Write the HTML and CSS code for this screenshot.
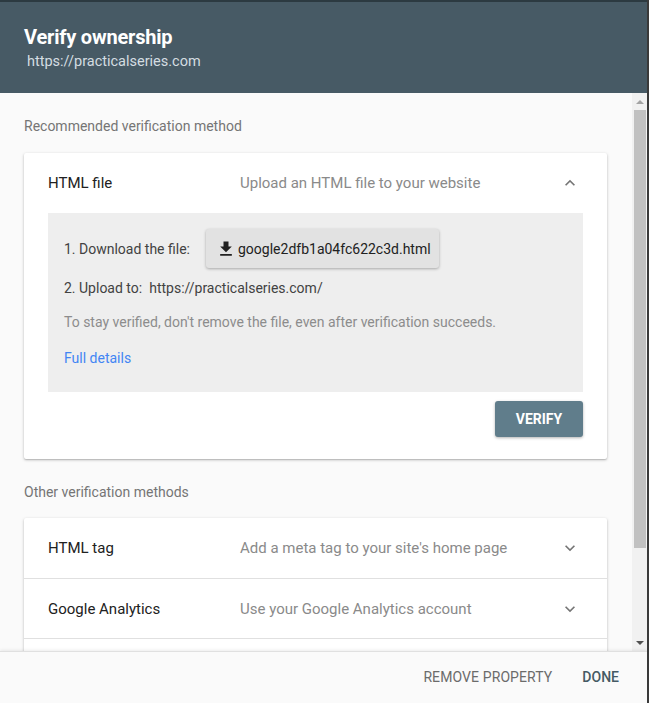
FILE: index.html
```html
<!DOCTYPE html>
<html>
<head>
<meta charset="utf-8">
<link rel="stylesheet" href="styles.css">
</head>
<body>
<div class="dialog">
  <header class="head">
    <h1 class="title">Verify ownership</h1>
    <div class="site">https://practicalseries.com</div>
  </header>
  <div class="middle">
    <main class="content">
      <div class="section-label">Recommended verification method</div>
      <section class="card">
        <div class="row">
          <div class="row-title">HTML file</div>
          <div class="row-desc">Upload an HTML file to your website</div>
          <svg class="chev" viewBox="0 0 24 24" width="20" height="20"><path d="M7.41 15.41 12 10.83l4.59 4.58L18 14l-6-6-6 6z" fill="#757575"/></svg>
        </div>
        <div class="panel">
          <div class="step">
            <span class="step-label">1. Download the file:</span>
            <button class="file-btn">
              <svg viewBox="0 0 24 24" width="20" height="20"><path d="M19 9h-4V3H9v6H5l7 7 7-7zM5 18v2h14v-2H5z" fill="#212121"/></svg>
              <span>google2dfb1a04fc622c3d.html</span>
            </button>
          </div>
          <div class="step step2">
            <span class="step-label">2. Upload to:</span>
            <span class="url">https://practicalseries.com/</span>
          </div>
          <p class="note">To stay verified, don't remove the file, even after verification succeeds.</p>
          <a class="link">Full details</a>
        </div>
        <div class="actions">
          <button class="verify">VERIFY</button>
        </div>
      </section>
      <div class="section-label other">Other verification methods</div>
      <section class="card list">
        <div class="row">
          <div class="row-title">HTML tag</div>
          <div class="row-desc">Add a meta tag to your site's home page</div>
          <svg class="chev" viewBox="0 0 24 24" width="20" height="20"><path d="M7.41 8.59 12 13.17l4.59-4.58L18 10l-6 6-6-6z" fill="#757575"/></svg>
        </div>
        <div class="row">
          <div class="row-title">Google Analytics</div>
          <div class="row-desc">Use your Google Analytics account</div>
          <svg class="chev" viewBox="0 0 24 24" width="20" height="20"><path d="M7.41 8.59 12 13.17l4.59-4.58L18 10l-6 6-6-6z" fill="#757575"/></svg>
        </div>
        <div class="row"></div>
      </section>
    </main>
    <div class="scrollbar">
      <div class="arrow up"></div>
      <div class="thumb"></div>
      <div class="track-rest"></div>
      <div class="arrow down"></div>
    </div>
  </div>
  <footer class="foot">
    <button class="text-btn remove">REMOVE PROPERTY</button>
    <button class="text-btn done">DONE</button>
  </footer>
</div>
</body>
</html>
```

FILE: styles.css
```css
html, body {
  margin: 0;
  padding: 0;
}
body {
  font-family: Roboto, "Liberation Sans", Arial, sans-serif;
  background: #fafafa;
}
.dialog {
  width: 649px;
  height: 703px;
  box-sizing: border-box;
  border-right: 2px solid #3a3a3a;
  display: flex;
  flex-direction: column;
  background: #fafafa;
  overflow: hidden;
}
.head {
  height: 93px;
  flex: none;
  box-sizing: border-box;
  background: #475a65;
  border-top: 2px solid #2c3a41;
  padding: 23px 24px 0 24px;
  color: #fff;
}
.title {
  margin: 0;
  font-size: 20px;
  font-weight: 700;
  line-height: 24px;
  letter-spacing: -0.2px;
}
.site {
  margin: 5px 0 0 3px;
  font-size: 14.5px;
  line-height: 16px;
  color: #d4dde1;
}
.middle {
  flex: 1;
  display: flex;
  min-height: 0;
}
.content {
  flex: 1;
  padding: 0 25px 0 24px;
  overflow: hidden;
}
.section-label {
  font-size: 14px;
  color: #757575;
  line-height: 20px;
  margin: 23px 0 17px 0;
}
.section-label.other {
  margin: 23px 0 16px 0;
}
.card {
  background: #fff;
  border-radius: 2px;
  box-shadow: 0 1px 3px rgba(0,0,0,0.25), 0 1px 1px rgba(0,0,0,0.1);
}
.row {
  height: 60px;
  box-sizing: border-box;
  display: flex;
  align-items: center;
  padding: 0 24px;
  font-size: 15px;
}
.list .row + .row {
  border-top: 1px solid #e0e0e0;
}
.row-title {
  width: 192px;
  flex: none;
  color: #212121;
}
.row-desc {
  flex: 1;
  color: #8a8a8a;
}
.chev {
  flex: none;
  margin-right: 3px;
}
.panel {
  margin: 0 24px;
  background: #eeeeee;
  padding: 16px 16px 15px 16px;
  height: 179px;
  box-sizing: border-box;
  font-size: 14px;
}
.step {
  display: flex;
  align-items: center;
  color: #424242;
}
.step-label {
  margin-right: 16px;
}
.file-btn {
  display: flex;
  align-items: center;
  gap: 2px;
  height: 39px;
  padding: 0 8px 0 10px;
  border: none;
  border-radius: 3px;
  background: #e2e2e2;
  box-shadow: 0 1px 3px rgba(0,0,0,0.3);
  font-family: inherit;
  font-size: 14px;
  color: #212121;
}
.step2 {
  margin-top: 12px;
}
.step2 .step-label {
  margin-right: 7px;
}
.url {
  color: #424242;
}
.note {
  margin: 17px 0 0 0;
  color: #8c8c8c;
  line-height: 18px;
}
.link {
  display: block;
  margin-top: 18px;
  color: #4285f4;
  line-height: 18px;
}
.actions {
  display: flex;
  justify-content: flex-end;
  padding: 9px 24px 22px 24px;
}
.verify {
  width: 88px;
  height: 36px;
  border: none;
  border-radius: 3px;
  background: #607d8b;
  color: #fff;
  font-family: inherit;
  font-weight: 700;
  font-size: 14px;
  box-shadow: 0 1px 3px rgba(0,0,0,0.3);
}
.scrollbar {
  width: 15px;
  flex: none;
  background: #f1f1f1;
  display: flex;
  flex-direction: column;
  align-items: center;
}
.arrow {
  height: 17px;
  width: 15px;
  flex: none;
  display: flex;
  justify-content: center;
  align-items: center;
}
.arrow::before {
  content: "";
  width: 0;
  height: 0;
  border-left: 4px solid transparent;
  border-right: 4px solid transparent;
}
.arrow.up::before {
  border-bottom: 4px solid #a3a3a3;
}
.arrow.down::before {
  border-top: 4px solid #505050;
}
.thumb {
  width: 12px;
  height: 438px;
  flex: none;
  background: #c1c1c1;
}
.track-rest {
  flex: 1;
}
.foot {
  height: 52px;
  flex: none;
  box-sizing: border-box;
  background: #fafafa;
  border-top: 1px solid #e0e0e0;
  box-shadow: 0 -1px 3px rgba(0,0,0,0.08);
  display: flex;
  justify-content: flex-end;
  align-items: center;
  padding: 0 20px 0 0;
  gap: 14px;
  position: relative;
}
.text-btn {
  border: none;
  background: transparent;
  font-family: inherit;
  font-size: 14px;
  font-weight: 500;
  padding: 0 8px;
  height: 36px;
  margin-top: -2px;
}
.remove {
  color: #6b6b6b;
  font-weight: 400;
  letter-spacing: 0.1px;
}
.done {
  color: #455a64;
}
```
